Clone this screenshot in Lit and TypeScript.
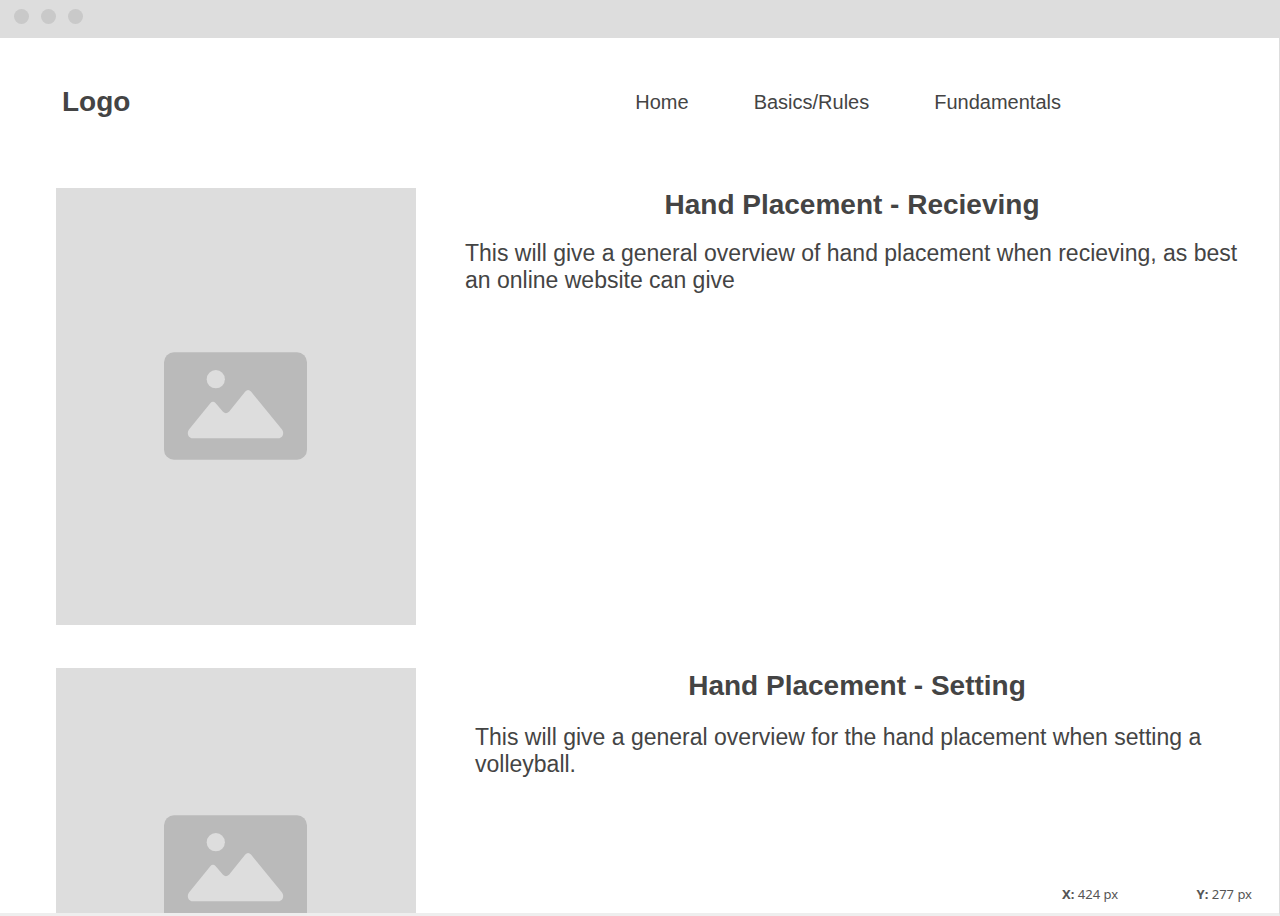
import { LitElement, html, css } from "lit";
import { customElement } from "lit/decorators.js";

@customElement("image-placeholder")
class ImagePlaceholder extends LitElement {
  static styles = css`
    :host { box-sizing: border-box; display: flex; align-items: center; justify-content: center; padding: 0 2px 2px 0; background: #dddddd; }
    .icon { display: block; width: 143px; height: 108px; }
  `;
  render() {
    return html`<svg class="icon" viewBox="0 0 143 108" role="img" aria-label="Image placeholder">
      <rect y="0.3" width="143" height="107.4" rx="10" fill="#bababa"></rect>
      <circle cx="51.8" cy="27.2" r="9.1" fill="#dddddd"></circle>
      <path d="M28.500 86.300C24.500 86.300 22.300 81 25 77.500L46.300 51.200Q49 48.400 51.700 51.200L59 59.800Q62 62.500 65 59.700L81.300 39.600Q84 36.200 87 39.600L118 77.500C120.700 81 118.500 86.300 114.500 86.300Z" fill="#dddddd"></path>
    </svg>`;
  }
}

@customElement("app-root")
class AppRoot extends LitElement {
  static styles = css`
    :host { display: block; height: 100vh; background: #fff; color: #444; font-family: "Liberation Sans", Arial, sans-serif; }
    * { box-sizing: border-box; }
    .window { height: 100%; display: flex; flex-direction: column; overflow: hidden; border-right: 1px solid #dddddd; border-bottom: 3px solid #eeeeee; position: relative; }
    .bar { flex: none; height: 38px; background: #dddddd; display: flex; gap: 12px; padding: 9px 14px; }
    .dot { width: 15px; height: 15px; border-radius: 50%; background: #c9c9c9; }
    .header { flex: none; display: flex; align-items: center; justify-content: space-between; padding: 48px 218px 0 62px; }
    .logo { font-size: 28px; line-height: 32px; font-weight: 700; }
    .nav { display: flex; gap: 65px; }
    .link { color: inherit; text-decoration: none; font-size: 20px; line-height: 24px; }
    .main { flex: none; padding: 70px 40px 0 56px; display: grid; gap: 43px; }
    .row { display: grid; grid-template-columns: 360px 1fr; gap: 49px; }
    .copy { padding-top: 1px; }
    .picture { height: 437px; }
    .short { height: 404px; }
    .title { margin: 0; text-align: center; font-size: 28px; line-height: 32px; }
    .text { margin: 19px 0 0; font-size: 23px; line-height: 27px; }
    .setting { padding: 2px 0 0 10px; }
    .setting .text { margin-top: 22px; }
    .status { position: absolute; right: 0; bottom: 0; width: 240px; height: 36px; background: #fff; color: #555; display: flex; justify-content: space-between; padding: 7px 27px 0 23px; font: 13px/20px "Noto Sans", sans-serif; }
  `;
  render() {
    return html`<div class="window">
      <div class="bar"><span class="dot"></span><span class="dot"></span><span class="dot"></span></div>
      <header class="header"><div class="logo">Logo</div>
        <nav class="nav"><a class="link" href="#home">Home</a><a class="link" href="#rules">Basics/Rules</a><a class="link" href="#fundamentals">Fundamentals</a></nav>
      </header>
      <main class="main">
        <section class="row"><image-placeholder class="picture"></image-placeholder>
          <div class="copy"><h2 class="title">Hand Placement - Recieving</h2><p class="text">This will give a general overview of hand placement when recieving, as best an online website can give</p></div>
        </section>
        <section class="row"><image-placeholder class="picture short"></image-placeholder>
          <div class="copy setting"><h2 class="title">Hand Placement - Setting</h2><p class="text">This will give a general overview for the hand placement when setting a volleyball.</p></div>
        </section>
      </main>
      <footer class="status"><span><b>X:</b> 424 px</span><span><b>Y:</b> 277 px</span></footer>
    </div>`;
  }
}
